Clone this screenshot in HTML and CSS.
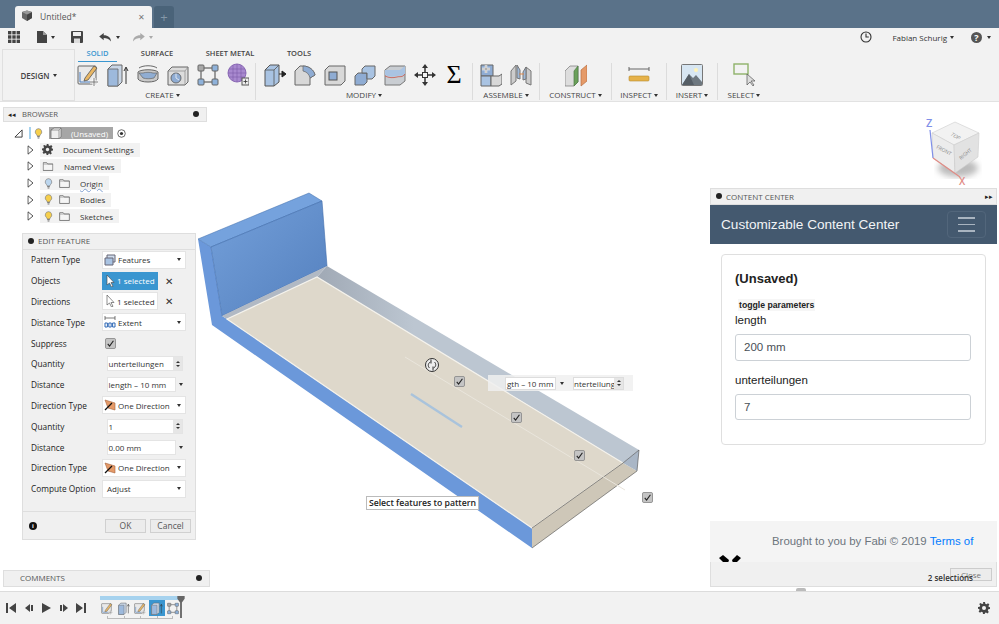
FILE: index.html
```html
<!DOCTYPE html>
<html lang="en">
<head>
  <meta charset="UTF-8">
  <title>Untitled* - Fusion 360</title>
  <link rel="stylesheet" href="styles.css">
</head>
<body>
  <!-- shared icons -->
  <svg class="defs" width="0" height="0">
    <symbol id="bulb" viewBox="0 0 10 12">
      <path d="M5 .6a3.7 3.7 0 0 0-2.2 6.6c.5.5.7 1 .7 1.6h3c0-.6.2-1.1.7-1.6A3.7 3.7 0 0 0 5 .6z" fill="#f6cf4c" stroke="#777" stroke-width=".7"/>
      <path d="M3.600 9.500h2.800M4 11h2" stroke="#666" stroke-width="1"/>
    </symbol>
    <symbol id="bulb-off" viewBox="0 0 10 12">
      <path d="M5 .6a3.7 3.7 0 0 0-2.2 6.6c.5.5.7 1 .7 1.6h3c0-.6.2-1.1.7-1.6A3.7 3.7 0 0 0 5 .6z" fill="#bcd6ee" stroke="#777" stroke-width=".7"/>
      <path d="M3.600 9.500h2.800M4 11h2" stroke="#666" stroke-width="1"/>
    </symbol>
    <symbol id="folder" viewBox="0 0 12 10">
      <path d="M.6 9.400V.8h4l1 1.400h5.800v7.200z" fill="#f5f5f5" stroke="#555" stroke-width=".8"/>
      <path d="M.6 2.400h10.800" stroke="#888" stroke-width=".6"/>
    </symbol>
    <symbol id="arrow-right" viewBox="0 0 8 12">
      <path d="M1 1l6 5-6 5z" fill="#fff" stroke="#333" stroke-width="1"/>
    </symbol>
    <symbol id="check" viewBox="0 0 12 12">
      <rect x=".5" y=".5" width="11" height="11" rx="1.600" fill="#c4c4c4" stroke="#8c8c8c"/>
      <path d="M3 6.500l2 2.400L9.200 3" fill="none" stroke="#222" stroke-width="1.200"/>
    </symbol>
    <symbol id="sketch" viewBox="0 0 22 24">
      <rect x="1" y="3" width="18" height="18" rx="1" fill="#e9e9e9" stroke="#666"/>
      <path d="M3 19L3 9M3 19h13" stroke="#4d7fc0" stroke-width="1"/>
      <path d="M8 15L17 3l3 2-9 12-4 1z" fill="#e9b765" stroke="#555" stroke-width=".8"/>
      <path d="M13 19h8M17 15v8" stroke="#fff" stroke-width="3"/>
      <path d="M13 19h8M17 15v8" stroke="#777" stroke-width="1"/>
    </symbol>
    <symbol id="extrude" viewBox="0 0 22 24">
      <path d="M1 6l4-4h10v17l-4 4H1z" fill="#c9d6e6" stroke="#666"/>
      <path d="M1 6h10v17H1z" fill="#9db9dc" stroke="#666" stroke-width=".8"/>
      <path d="M19 21V5M17 8l2-4 2 4" fill="none" stroke="#333"/>
    </symbol>
    <symbol id="pattern" viewBox="0 0 22 22">
      <path d="M5 4h12M4 6v10M18 6v10M6 18h10" stroke="#444" stroke-width="1"/>
      <rect x="1" y="1" width="6" height="6" rx="1" fill="#a9a9a9" stroke="#666"/>
      <rect x="15" y="1" width="6" height="6" rx="1" fill="#8fb2da" stroke="#666"/>
      <rect x="1" y="15" width="6" height="6" rx="1" fill="#8fb2da" stroke="#666"/>
      <rect x="15" y="15" width="6" height="6" rx="1" fill="#8fb2da" stroke="#666"/>
    </symbol>
  </svg>

  <div class="app">
    <header class="title-bar">
      <div class="doc-tab">
        <svg class="tab-icon" viewBox="0 0 12 12"><path d="M1 2l5-1.500L11 2v6L6 11 1 8z" fill="#666"/><path d="M6 4.500V11l5-3V2z" fill="#444"/><path d="M1 2l5 2.500L11 2 6 .5z" fill="#999"/></svg>
        <span class="doc-name">Untitled*</span>
        <span class="doc-close">✕</span>
      </div>
      <div class="new-tab">+</div>
    </header>

    <div class="toolbar">
      <div class="quick-bar">
        <svg class="qa-grid" viewBox="0 0 12 12" fill="#444"><rect width="3.400" height="3.400"/><rect x="4.300" width="3.400" height="3.400"/><rect x="8.600" width="3.400" height="3.400"/><rect y="4.300" width="3.400" height="3.400"/><rect x="4.300" y="4.300" width="3.400" height="3.400"/><rect x="8.600" y="4.300" width="3.400" height="3.400"/><rect y="8.600" width="3.400" height="3.400"/><rect x="4.300" y="8.600" width="3.400" height="3.400"/><rect x="8.600" y="8.600" width="3.400" height="3.400"/></svg>
        <svg class="qa-file" viewBox="0 0 10 12"><path d="M0 0h6l4 4v8H0z" fill="#444"/><path d="M6 0v4h4" fill="#999"/></svg>
        <span class="caret qa-caret"></span>
        <svg class="qa-save" viewBox="0 0 12 12"><path d="M0 1a1 1 0 0 1 1-1h10a1 1 0 0 1 1 1v10a1 1 0 0 1-1 1H1a1 1 0 0 1-1-1z" fill="#444"/><rect x="2" y="1" width="8" height="4" fill="#eee"/><rect x="3" y="7.500" width="6" height="4.500" fill="#ddd"/></svg>
        <svg class="qa-undo" viewBox="0 0 14 10"><path d="M5 0L0 4l5 4V5.500c3 0 6 .6 8 4C13 5 10 2.500 5 2.500z" fill="#444"/></svg>
        <span class="caret qa-caret"></span>
        <svg class="qa-redo" viewBox="0 0 14 10"><path d="M9 0l5 4-5 4V5.500c-3 0-6 .6-8 4C1 5 4 2.500 9 2.500z" fill="#aaa"/></svg>
        <span class="caret qa-caret light"></span>
        <div class="quick-right">
          <svg class="qa-clock" viewBox="0 0 12 12"><circle cx="6" cy="6" r="5" fill="none" stroke="#333" stroke-width="1.100"/><path d="M6 2.600V6h2.800" fill="none" stroke="#333" stroke-width="1.100"/></svg>
          <span class="user-name">Fabian Schurig</span>
          <span class="caret"></span>
          <span class="help">?</span>
          <span class="caret"></span>
        </div>
      </div>

      <div class="ribbon">
        <div class="design-btn">DESIGN <span class="caret"></span></div>
        <div class="ribbon-main">
          <div class="ribbon-tabs">
            <span class="ribbon-tab active">SOLID</span>
            <span class="ribbon-tab">SURFACE</span>
            <span class="ribbon-tab">SHEET METAL</span>
            <span class="ribbon-tab">TOOLS</span>
          </div>
          <div class="ribbon-groups">
            <div class="group create">
              <div class="tools">
                <svg class="tool" viewBox="0 0 22 24"><use href="#sketch"/></svg>
                <svg class="tool" viewBox="0 0 22 24"><use href="#extrude"/></svg>
                <svg class="tool" viewBox="0 0 22 24"><path d="M1 9c3-3 17-3 20 0v7c-2 4-18 4-20 0z" fill="#c9c9c9" stroke="#666"/><path d="M6 10c3-1 7-1 10 0l4 0-3 5c-4 1-8 1-11 0L2 10z" fill="#90add2" stroke="#666" stroke-width=".7"/><path d="M2 5C6 2 16 2 20 5" fill="none" stroke="#444" stroke-width=".8"/></svg>
                <svg class="tool" viewBox="0 0 22 24"><path d="M1 8l4-4h16v15l-3 3H1z" fill="#ddd" stroke="#666"/><path d="M1 8h17v14M18 8l3-4" fill="none" stroke="#888" stroke-width=".7"/><circle cx="9" cy="15" r="5" fill="#8facd3" stroke="#555" stroke-width=".8"/><path d="M9 15V10.500M9 15l3 2" stroke="#fff" stroke-width=".7"/></svg>
                <svg class="tool" viewBox="0 0 22 22"><use href="#pattern"/></svg>
                <svg class="tool" viewBox="0 0 22 24"><circle cx="10" cy="10" r="9" fill="#a889cf" stroke="#8a68b5"/><path d="M2 6h16M1 10h18M2 14h16M6 2v16M10 1v18M14 2v16" stroke="#7c5aa8" stroke-width=".6"/><rect x="15" y="15" width="7" height="7" fill="#eee" stroke="#555"/><path d="M16.500 18.500h4M18.500 16.500v4" stroke="#333" stroke-width=".8"/></svg>
              </div>
              <div class="group-label">CREATE <span class="caret"></span></div>
            </div>
            <div class="group modify">
              <div class="tools">
                <svg class="tool" viewBox="0 0 22 24"><path d="M1 7l5-5h9v17l-5 4H1z" fill="#a9c3e2" stroke="#555"/><path d="M1 7h9v16M10 7l5-5" fill="none" stroke="#555" stroke-width=".8"/><path d="M15 11h4M18 8l4 3-4 3z" stroke="#222" fill="#222"/></svg>
                <svg class="tool" viewBox="0 0 22 24"><path d="M1 8l5-5h3c6 0 11 4 12 9l-5 3v7H1z" fill="#d8d8d8" stroke="#666"/><path d="M9 3c6 0 11 4 12 9l-5 3c-1-4-3-6-7-7z" fill="#8facd3" stroke="#666" stroke-width=".7"/></svg>
                <svg class="tool" viewBox="0 0 22 24"><path d="M1 7l4-4h16v15l-4 4H1z" fill="#d8d8d8" stroke="#666"/><rect x="5" y="9" width="8" height="8" fill="#8facd3" stroke="#555"/></svg>
                <svg class="tool" viewBox="0 0 22 24"><path d="M1 13l3-3h9v9l-3 3H1z" fill="#8facd3" stroke="#666"/><path d="M8 6l3-3h10v10l-3 3h-5v-6H8z" fill="#a9c3e2" stroke="#666"/></svg>
                <svg class="tool" viewBox="0 0 22 24"><path d="M1 7l5-4h15v15l-5 4H1z" fill="#c9cdd2" stroke="#777"/><path d="M1 7h15l5-4v8c-3 3-5 1-8 2-4 1-8 1-12-1z" fill="#a9c3e2"/><path d="M1 13c4 2 8 2 12 1 3-1 5 1 8-3" fill="none" stroke="#c8635a" stroke-width=".9"/></svg>
                <svg class="tool" viewBox="0 0 22 24"><path d="M11 3v18M2 12h18" stroke="#333" stroke-width="1.500"/><path d="M11 1l3 4H8zM11 23l3-4H8zM0 12l4-3v6zM22 12l-4-3v6z" fill="#333"/><rect x="8.500" y="9.500" width="5" height="5" fill="#f2f2f2" stroke="#333"/></svg>
                <span class="sigma">Σ</span>
              </div>
              <div class="group-label">MODIFY <span class="caret"></span></div>
            </div>
            <div class="group assemble">
              <div class="tools">
                <svg class="tool" viewBox="0 0 22 24"><path d="M1 2h12v11H1z" fill="#8facd3" stroke="#666"/><path d="M1 13h10v10H1z" fill="#a9c3e2" stroke="#666"/><path d="M11 13h8l3-2v10l-3 2h-8z" fill="#d8d8d8" stroke="#666"/><path d="M2 6h8M6 2v8" stroke="#fff" stroke-width="2.400"/><path d="M2 6h8M6 2v8" stroke="#666" stroke-width=".6"/></svg>
                <svg class="tool" viewBox="0 0 22 24"><path d="M1 8l5-6v16l-5 4z" fill="#ccc" stroke="#777"/><path d="M7 2l3 5v9l-3-1z" fill="#9fb8d6" stroke="#777"/><path d="M21 8l-5-4v16l5 2z" fill="#ccc" stroke="#777"/><path d="M16 4l-3 5v8l3-1z" fill="#9fb8d6" stroke="#777"/><path d="M9 11h5" stroke="#d9864b"/></svg>
              </div>
              <div class="group-label">ASSEMBLE <span class="caret"></span></div>
            </div>
            <div class="group construct">
              <div class="tools">
                <svg class="tool" viewBox="0 0 22 22"><path d="M0 7l5-5h8v16l-4 4H0z" fill="#ddd" stroke="#777" stroke-width=".7"/><path d="M9 7l4-5v16l-4 4z" fill="#6aa05a" stroke="#4f7d45" stroke-width=".7"/><path d="M16 6l6-5v16l-6 5z" fill="#e59a68" stroke="#b86f42" stroke-width=".7"/></svg>
              </div>
              <div class="group-label">CONSTRUCT <span class="caret"></span></div>
            </div>
            <div class="group inspect">
              <div class="tools">
                <svg class="tool" viewBox="0 0 22 22"><path d="M1 5h20M1 3v4M21 3v4" stroke="#666" stroke-width="1"/><rect x="1" y="12" width="20" height="5" rx="1" fill="#e6b24a" stroke="#b78a2e" stroke-width=".6"/></svg>
              </div>
              <div class="group-label">INSPECT <span class="caret"></span></div>
            </div>
            <div class="group insert">
              <div class="tools">
                <svg class="tool" viewBox="0 0 22 22"><rect x=".5" y=".5" width="21" height="21" rx="1" fill="#d7e6f2" stroke="#777"/><circle cx="15" cy="6" r="2" fill="#fff3b8"/><path d="M1 21l7-11 4 4 3-3 6 7v3z" fill="#6e7880"/><path d="M1 21l7-11 5 11z" fill="#555e66"/></svg>
              </div>
              <div class="group-label">INSERT <span class="caret"></span></div>
            </div>
            <div class="group select">
              <div class="tools">
                <svg class="tool" viewBox="0 0 22 24"><rect x="1" y="1" width="14" height="10" fill="none" stroke="#8fb36a" stroke-width="1.400"/><path d="M14 11v11l3-3 3 4 1-1-3-4h4z" fill="#ddd" stroke="#555" stroke-width=".7"/></svg>
              </div>
              <div class="group-label">SELECT <span class="caret"></span></div>
            </div>
          </div>
        </div>
      </div>
    </div>

    <main class="canvas">
      <!-- model -->
      <svg class="model" viewBox="0 102 999 489">
        <defs>
          <linearGradient id="wall" x1="0" y1="0" x2="1" y2="1"><stop offset="0" stop-color="#74a0da"/><stop offset="1" stop-color="#5480be"/></linearGradient>
          <linearGradient id="back" x1="0" y1="0" x2="1" y2="0"><stop offset="0" stop-color="#a0a9b5"/><stop offset=".3" stop-color="#bcc6d1"/></linearGradient>
          <filter id="soft"><feGaussianBlur stdDeviation="3"/></filter>
        </defs>
        <path d="M198 239L212 325 532 548 532 528 227 319 222 316 211 247z" fill="#6b98da"/>
        <path d="M198 239L309 193 322 201 211 247z" fill="#75a2dd" stroke="#3f6cab" stroke-width=".5"/>
        <path d="M211 247L322 201 327 266 222 316z" fill="url(#wall)" stroke="#3f6cab" stroke-width=".6"/>
        <path d="M327 266L639 450 623 463 317 277z" fill="url(#back)"/>
        <path d="M222 316L327 266 317 277 227 319z" fill="#b1b9c4"/>
        <path d="M227 319L317 277 623 463 532 528z" fill="#ded8cb" stroke="#f4f2ec" stroke-width="1.200"/>
        <path d="M532 528L623 463 637 471 532 548z" fill="#cec7b8"/>
        <path d="M623 463L639 450 637 471z" fill="#a9b6c6"/>
        <path d="M532 528L623 463 639 450 637 471 532 548" fill="none" stroke="#4c4c4c" stroke-width=".6"/>
        <path d="M405 357L625 490" stroke="#e9e5dc" stroke-width="1"/>
        <path d="M411 394L462 427" stroke="#a9c3dc" stroke-width="2.400"/>
        <circle cx="432" cy="365" r="6.500" fill="#eee" stroke="#333" stroke-width="1"/>
        <path d="M429.500 368c-2-2-1.500-5 1-6M434.500 362c2 2 1.500 5-1 6M431 359.500l0 4M433 366.500l0 4" fill="none" stroke="#333" stroke-width="1"/>
        <use href="#check" x="454" y="376" width="11" height="11"/>
        <use href="#check" x="511" y="412" width="11" height="11"/>
        <use href="#check" x="574" y="450" width="11" height="11"/>
        <use href="#check" x="642" y="492" width="11" height="11"/>
        <!-- view cube -->
        <ellipse cx="958" cy="168" rx="20" ry="9" fill="#bbb" filter="url(#soft)"/>
        <path d="M932 133L955 122 979 133 954 145z" fill="#f2f2f2" stroke="#ccc" stroke-width=".6"/>
        <path d="M932 133L954 145 955 173 933 158z" fill="#ececec" stroke="#ccc" stroke-width=".6"/>
        <path d="M954 145L979 133 978 157 955 173z" fill="#e2e2e2" stroke="#ccc" stroke-width=".6"/>
        <path d="M930 130L933 158" stroke="#7f8fe8" stroke-width="1.200"/>
        <path d="M933 158L960 177" stroke="#e08b85" stroke-width="1.200"/>
        <text class="axis z" x="926" y="127">Z</text>
        <text class="axis x" x="959" y="185">X</text>
        <text class="cube-txt" transform="translate(950 135) rotate(30) skewX(-20)">TOP</text>
        <text class="cube-txt" transform="translate(936 148) rotate(28)">FRONT</text>
        <text class="cube-txt" transform="translate(961 160) rotate(-40)">RIGHT</text>
      </svg>

      <!-- browser -->
      <section class="browser">
        <div class="panel-head"><span class="head-arrows">◂◂</span><span class="head-title">BROWSER</span><span class="head-dot"></span></div>
        <div class="tree">
          <div class="tree-row root">
            <svg class="root-arrow" viewBox="0 0 10 10"><path d="M9 1v8H1z" fill="#fff" stroke="#333"/></svg>
            <span class="active-bar"></span>
            <svg class="ic-bulb" viewBox="0 0 10 12"><use href="#bulb"/></svg>
            <span class="root-name"><svg class="root-cube" viewBox="0 0 12 12"><path d="M1 3l3-2h7v9l-2 1.500H1z" fill="#eee" stroke="#666" stroke-width=".7"/><path d="M1 3h8v8.500M9 3l2-2" fill="none" stroke="#666" stroke-width=".6"/></svg>(Unsaved)</span>
            <svg class="ic-radio" viewBox="0 0 10 10"><circle cx="5" cy="5" r="4.200" fill="#fff" stroke="#333" stroke-width=".8"/><circle cx="5" cy="5" r="1.800" fill="#333"/></svg>
          </div>
          <div class="tree-row">
            <svg class="expander" viewBox="0 0 8 12"><use href="#arrow-right"/></svg>
            <span class="pill">
              <svg class="ic-gear" viewBox="0 0 12 12"><path d="M5 0h2l.3 1.700 1.300.5L10 1.200l1.400 1.400-1 1.400.6 1.300L12 5v2l-1.700.3-.5 1.300 1 1.400-1.400 1.400-1.400-1-1.300.6L7 12H5l-.3-1.700-1.300-.5-1.400 1-1.400-1.400 1-1.400-.6-1.300L0 7V5l1.700-.3.5-1.300-1-1.400L2.600 1l1.400 1 1.300-.6z" fill="#444"/><circle cx="6" cy="6" r="1.800" fill="#eee"/></svg>
              <span class="node-name">Document Settings</span>
            </span>
          </div>
          <div class="tree-row">
            <svg class="expander" viewBox="0 0 8 12"><use href="#arrow-right"/></svg>
            <span class="pill">
              <svg class="ic-folder" viewBox="0 0 12 10"><use href="#folder"/></svg>
              <span class="node-name">Named Views</span>
            </span>
          </div>
          <div class="tree-row">
            <svg class="expander" viewBox="0 0 8 12"><use href="#arrow-right"/></svg>
            <span class="pill">
              <svg class="ic-bulb node" viewBox="0 0 10 12"><use href="#bulb-off"/></svg>
              <svg class="ic-folder" viewBox="0 0 12 10"><use href="#folder"/></svg>
              <span class="node-name squiggle">Origin</span>
            </span>
          </div>
          <div class="tree-row">
            <svg class="expander" viewBox="0 0 8 12"><use href="#arrow-right"/></svg>
            <span class="pill">
              <svg class="ic-bulb node" viewBox="0 0 10 12"><use href="#bulb"/></svg>
              <svg class="ic-folder" viewBox="0 0 12 10"><use href="#folder"/></svg>
              <span class="node-name">Bodies</span>
            </span>
          </div>
          <div class="tree-row">
            <svg class="expander" viewBox="0 0 8 12"><use href="#arrow-right"/></svg>
            <span class="pill">
              <svg class="ic-bulb node" viewBox="0 0 10 12"><use href="#bulb"/></svg>
              <svg class="ic-folder" viewBox="0 0 12 10"><use href="#folder"/></svg>
              <span class="node-name">Sketches</span>
            </span>
          </div>
        </div>
      </section>

      <!-- edit feature dialog -->
      <section class="edit-feature">
        <div class="panel-head"><span class="head-dot left"></span><span class="head-title">EDIT FEATURE</span></div>
        <div class="form">
          <div class="form-row"><label>Pattern Type</label><div class="field select-field"><svg class="f-ic" viewBox="0 0 12 12"><path d="M3 1h8v7H3z" fill="#cfdcec" stroke="#667"/><path d="M1 4h8v7H1z" fill="#a9c3e2" stroke="#667"/></svg>Features<span class="caret end"></span></div></div>
          <div class="form-row"><label>Objects</label><div class="field sel on"><svg class="f-ic" viewBox="0 0 12 12"><path d="M3 0v10l2.500-2 2 4 1.500-.7-2-3.800h3z" fill="#fff" stroke="#444" stroke-width=".6"/></svg>1 selected</div><span class="x">✕</span></div>
          <div class="form-row"><label>Directions</label><div class="field sel"><svg class="f-ic" viewBox="0 0 12 12"><path d="M3 0v10l2.500-2 2 4 1.500-.7-2-3.800h3z" fill="#fff" stroke="#444" stroke-width=".6"/></svg>1 selected</div><span class="x">✕</span></div>
          <div class="form-row"><label>Distance Type</label><div class="field select-field"><svg class="f-ic" viewBox="0 0 12 12"><path d="M1 2h10M1 0v4M11 0v4" stroke="#444" stroke-width=".7"/><path d="M1 7h2.400v4H1zM4.800 7h2.400v4H4.800zM8.600 7H11v4H8.600z" fill="#fff" stroke="#2f68b5"/></svg>Extent<span class="caret end"></span></div></div>
          <div class="form-row"><label>Suppress</label><svg class="suppress" viewBox="0 0 12 12"><use href="#check"/></svg></div>
          <div class="form-row"><label>Quantity</label><div class="input-spin"><span class="inp-text">unterteilungen</span><span class="spin"><i></i><i class="down"></i></span></div></div>
          <div class="form-row"><label>Distance</label><div class="input-drop"><span class="inp-text">length – 10 mm</span></div><span class="caret drop"></span></div>
          <div class="form-row"><label>Direction Type</label><div class="field select-field"><svg class="f-ic" viewBox="0 0 12 12"><path d="M1 1l10 3v7L4 9z" fill="#e59a68" stroke="#a5623a" stroke-width=".6"/><path d="M1 11l7-7" stroke="#111" stroke-width="1.300"/></svg>One Direction<span class="caret end"></span></div></div>
          <div class="form-row"><label>Quantity</label><div class="input-spin"><span class="inp-text">1</span><span class="spin"><i></i><i class="down"></i></span></div></div>
          <div class="form-row"><label>Distance</label><div class="input-drop"><span class="inp-text">0.00 mm</span></div><span class="caret drop"></span></div>
          <div class="form-row"><label>Direction Type</label><div class="field select-field"><svg class="f-ic" viewBox="0 0 12 12"><path d="M1 1l10 3v7L4 9z" fill="#e59a68" stroke="#a5623a" stroke-width=".6"/><path d="M1 11l7-7" stroke="#111" stroke-width="1.300"/></svg>One Direction<span class="caret end"></span></div></div>
          <div class="form-row"><label>Compute Option</label><div class="field select-field plain">Adjust<span class="caret end"></span></div></div>
        </div>
        <div class="form-foot">
          <span class="info">i</span>
          <button class="btn">OK</button>
          <button class="btn">Cancel</button>
        </div>
      </section>

      <!-- in-canvas bits -->
      <div class="hud">
        <span class="hud-input">gth – 10 mm</span>
        <span class="caret"></span>
        <span class="hud-spin"><span class="hud-text">nterteilungen</span><span class="spin"><i></i><i class="down"></i></span></span>
      </div>
      <div class="tooltip">Select features to pattern</div>

      <section class="comments">
        <span class="head-title">COMMENTS</span><span class="head-dot plus"></span>
      </section>

      <!-- content center palette -->
      <section class="content-center">
        <div class="panel-head"><span class="head-dot left"></span><span class="head-title">CONTENT CENTER</span><span class="head-arrows end">▸▸</span></div>
        <div class="cc-nav">
          <span class="cc-brand">Customizable Content Center</span>
          <span class="cc-toggler"><i></i><i></i><i></i></span>
        </div>
        <div class="cc-body">
          <div class="cc-card">
            <h2>(Unsaved)</h2>
            <div class="cc-toggle">toggle parameters</div>
            <div class="cc-label">length</div>
            <div class="cc-input">200 mm</div>
            <div class="cc-label second">unterteilungen</div>
            <div class="cc-input">7</div>
          </div>
        </div>
        <div class="cc-footer">
          <p>Brought to you by Fabi © 2019 <a>Terms of</a></p>
          <svg class="cc-logo" viewBox="0 0 22 8"><path d="M0 3l4-3 6 5-1 3H5zM22 3l-4-3-5 5 1 3h3z" fill="#000"/></svg>
        </div>
        <div class="cc-status">
          <span class="cc-selections">2 selections</span>
          <button class="cc-close">Close</button>
        </div>
      </section>
      <span class="cc-handle"></span>
    </main>

    <footer class="timeline">
      <div class="player">
        <svg viewBox="0 0 10 10"><path d="M0 0h2v10H0zM10 0v10L3 5z" fill="#444"/></svg>
        <svg viewBox="0 0 10 10"><path d="M6 1v8L1 5zM7 2h2v6H7z" fill="#444"/></svg>
        <svg viewBox="0 0 10 10"><path d="M1 0l9 5-9 5z" fill="#444"/></svg>
        <svg viewBox="0 0 10 10"><path d="M4 1v8l5-4zM1 2h2v6H1z" fill="#444"/></svg>
        <svg viewBox="0 0 10 10"><path d="M10 0H8v10h2zM0 0v10l7-5z" fill="#444"/></svg>
      </div>
      <div class="history">
        <span class="hist-bar"></span>
        <span class="hist-item"><svg viewBox="0 0 22 24"><use href="#sketch"/></svg></span>
        <span class="hist-item"><svg viewBox="0 0 22 24"><use href="#extrude"/></svg></span>
        <span class="hist-item"><svg viewBox="0 0 22 24"><use href="#sketch"/></svg></span>
        <span class="hist-item on"><svg viewBox="0 0 22 24"><use href="#extrude"/></svg></span>
        <span class="hist-item"><svg viewBox="0 0 22 22"><use href="#pattern"/></svg></span>
        <span class="hist-links"></span>
        <svg class="hist-marker" viewBox="0 0 8 24"><path d="M0 0h8v3L5 7v17H3V7L0 3z" fill="#666"/></svg>
      </div>
      <svg class="settings" viewBox="0 0 12 12"><path d="M5 0h2l.3 1.700 1.300.5L10 1.200l1.400 1.400-1 1.400.6 1.300L12 5v2l-1.700.3-.5 1.300 1 1.400-1.400 1.400-1.400-1-1.300.6L7 12H5l-.3-1.700-1.300-.5-1.400 1-1.400-1.400 1-1.400-.6-1.300L0 7V5l1.700-.3.5-1.300-1-1.400L2.600 1l1.400 1 1.300-.6z" fill="#444"/><circle cx="6" cy="6" r="2" fill="#f2f2f2"/></svg>
    </footer>
  </div>
</body>
</html>
```

FILE: styles.css
```css
* {
  box-sizing: border-box;
}

body {
  margin: 0;
  font-family: "Open Sans", "Liberation Sans", sans-serif;
  font-size: 8px;
  color: #333;
  background: #fff;
}

.defs {
  position: absolute;
}

.app {
  width: 999px;
  height: 624px;
  display: flex;
  flex-direction: column;
  overflow: hidden;
}

.caret {
  display: inline-block;
  width: 0;
  height: 0;
  border-left: 2.5px solid transparent;
  border-right: 2.5px solid transparent;
  border-top: 3px solid #333;
  vertical-align: middle;
}

/* title bar */
.title-bar {
  height: 28px;
  flex: none;
  background: #5a7289;
  display: flex;
  align-items: flex-end;
  padding-left: 15px;
  gap: 2px;
}

.doc-tab {
  width: 137px;
  height: 22px;
  background: #f2f2f2;
  border-radius: 3px 3px 0 0;
  display: flex;
  align-items: center;
  padding: 0 7px 2px 6px;
}

.tab-icon {
  width: 12px;
  height: 12px;
}

.doc-name {
  margin-left: 7px;
  font-size: 8.5px;
  color: #555;
  flex: 1;
}

.doc-close {
  font-size: 8px;
  color: #777;
}

.new-tab {
  width: 20px;
  height: 22px;
  background: #4a6379;
  border-radius: 3px 3px 0 0;
  color: #8497a8;
  font-size: 13px;
  line-height: 22px;
  text-align: center;
}

/* toolbar */
.toolbar {
  height: 74px;
  flex: none;
  background: #f2f2f2;
  border-bottom: 1px solid #e2e2e2;
}

.quick-bar {
  height: 18px;
  margin-bottom: 2px;
  display: flex;
  align-items: center;
  padding-left: 8px;
}

.qa-grid {
  width: 12px;
  height: 12px;
}

.qa-file {
  width: 10px;
  height: 12px;
  margin-left: 17px;
}

.qa-caret {
  margin-left: 4px;
}

.qa-caret.light {
  border-top-color: #aaa;
}

.qa-save {
  width: 12px;
  height: 12px;
  margin-left: 16px;
}

.qa-undo {
  width: 13px;
  height: 9px;
  margin-left: 16px;
}

.qa-redo {
  width: 13px;
  height: 9px;
  margin-left: 12px;
}

.quick-right {
  margin-left: auto;
  display: flex;
  align-items: center;
  padding-right: 8.5px;
}

.qa-clock {
  width: 12px;
  height: 12px;
}

.user-name {
  margin-left: 20px;
  margin-right: 3px;
  font-size: 8px;
  color: #333;
}

.help {
  width: 11px;
  height: 11px;
  margin-left: 17px;
  margin-right: 4.5px;
  border-radius: 50%;
  background: #555;
  color: #fff;
  font-size: 9px;
  font-weight: 700;
  line-height: 11px;
  text-align: center;
}

.ribbon {
  height: 53px;
  display: flex;
  padding-left: 2px;
}

.design-btn {
  width: 73px;
  height: 52px;
  margin-top: 1px;
  border: 1px solid #e0e0e0;
  display: flex;
  align-items: center;
  justify-content: center;
  gap: 3px;
  font-size: 8px;
  font-weight: 600;
  color: #444;
}

.ribbon-main {
  margin-left: 3px;
}

.ribbon-tabs {
  display: grid;
  grid-template-columns: 39px 80px 66px 72px;
  height: 14px;
  text-align: center;
  line-height: 10px;
  font-size: 7.5px;
  font-weight: 600;
  color: #444;
}

.ribbon-tab.active {
  color: #3a96d0;
  border-bottom: 1px solid #3a96d0;
}

.ribbon-groups {
  display: flex;
  height: 37px;
  margin-top: 1px;
}

.group {
  display: flex;
  flex-direction: column;
  align-items: center;
  justify-content: space-between;
  border-right: 1px solid #dcdcdc;
}

.group.create { width: 178px; padding-right: 8px; }
.group.modify { width: 217px; }
.group.assemble { width: 67px; }
.group.construct { width: 72px; }
.group.inspect { width: 55px; }
.group.insert { width: 51px; }
.group.select { width: 52px; border-right: 0; }

.tools {
  display: flex;
  gap: 8px;
}

.tool {
  width: 22px;
  height: 24px;
  flex: none;
}

.sigma {
  width: 20px;
  height: 24px;
  font-family: "Liberation Serif", serif;
  font-size: 26px;
  line-height: 23px;
  text-align: center;
  color: #000;
}

.group-label {
  height: 10px;
  line-height: 10px;
  font-size: 8px;
  color: #444;
}

/* canvas */
.canvas {
  position: relative;
  flex: 1;
  background: #fff;
  overflow: hidden;
}

.model {
  position: absolute;
  left: 0;
  top: 0;
  width: 999px;
  height: 489px;
}

.axis {
  font-family: "Open Sans", sans-serif;
  font-size: 11px;
  font-weight: 600;
}

.axis.z {
  fill: #7f8fe8;
}

.axis.x {
  fill: #e08b85;
}

.cube-txt {
  font-family: "Open Sans", sans-serif;
  font-size: 5px;
  fill: #8a8a8a;
}

.panel-head {
  height: 15px;
  padding-bottom: 1px;
  display: flex;
  align-items: center;
  background: #f0f0f0;
  border: 1px solid #dedede;
  color: #555;
}

.head-title {
  font-size: 8px;
  color: #555;
}

.browser .head-title {
  font-size: 7.7px;
}

.head-arrows {
  font-size: 7px;
  margin: 0 6px 0 4px;
  color: #222;
}

.head-arrows.end {
  margin: 0 3px 0 auto;
}

.head-dot {
  width: 6px;
  height: 6px;
  margin-left: auto;
  margin-right: 7px;
  border-radius: 50%;
  background: #222;
}

.head-dot.left {
  margin: 0 4px 0 5px;
}

/* browser */
.browser {
  position: absolute;
  left: 3px;
  top: 5px;
  width: 204px;
}

.tree {
  padding-top: 3px;
}

.tree-row {
  height: 16.6px;
  display: flex;
  align-items: center;
  padding-left: 24px;
}

.tree-row.root {
  padding-left: 11px;
}

.root-arrow {
  width: 9px;
  height: 9px;
}

.active-bar {
  width: 2px;
  height: 12px;
  margin-left: 6px;
  background: #a6d2ee;
}

.ic-bulb {
  width: 9px;
  height: 11px;
  margin-left: 3px;
}

.root-name {
  width: 64px;
  height: 12px;
  margin-left: 6px;
  background: #a6a6a6;
  color: #fff;
  display: flex;
  align-items: center;
  font-size: 8px;
}

.root-cube {
  width: 12px;
  height: 12px;
  margin: 0 9px 0 1px;
}

.ic-radio {
  width: 9px;
  height: 9px;
  margin-left: 4px;
}

.expander {
  width: 7px;
  height: 10px;
}

.pill {
  height: 14px;
  margin-left: 6px;
  padding: 0 6px 0 2px;
  display: flex;
  align-items: center;
  background: #f2f2f2;
}

.ic-gear {
  width: 11px;
  height: 11px;
}

.ic-folder {
  width: 11px;
  height: 9px;
}

.ic-bulb.node {
  margin: 0 6px 0 2px;
}

.pill > .ic-folder:first-child {
  width: 12px;
}

.node-name {
  margin-left: 10px;
  font-size: 8px;
  color: #333;
}

.node-name.squiggle {
  text-decoration: underline wavy #7f9fd0;
  text-decoration-thickness: 1px;
}

/* edit feature */
.edit-feature {
  position: absolute;
  left: 22px;
  top: 131px;
  width: 174px;
  height: 307px;
  background: #f0f0f0;
  border: 1px solid #dedede;
  display: flex;
  flex-direction: column;
}

.edit-feature .panel-head {
  border-width: 0 0 1px;
  height: 15.5px;
  flex: none;
}

.form {
  flex: 1;
  display: grid;
  grid-auto-rows: 20.8px;
}

.form-row {
  display: flex;
  align-items: center;
  padding-left: 8px;
  position: relative;
}

.form-row label {
  width: 71px;
  flex: none;
  font-size: 8.3px;
  color: #222;
}

.field {
  height: 18px;
  background: #fff;
  border: 1px solid #e4e4e4;
  display: flex;
  align-items: center;
  padding-left: 1px;
  font-size: 8px;
  color: #333;
  white-space: nowrap;
}

.select-field {
  width: 84px;
}

.select-field.plain {
  padding-left: 4px;
}

.f-ic {
  width: 12px;
  height: 12px;
  margin-right: 2px;
  flex: none;
}

.caret.end {
  margin-left: auto;
  margin-right: 4px;
}

.sel {
  width: 56px;
  font-size: 8px;
}

.sel .f-ic {
  margin-right: 1px;
}

.sel.on {
  background: #3a96d0;
  border-color: #3a96d0;
  color: #fff;
}

.x {
  margin-left: 7px;
  font-size: 10px;
  color: #333;
}

.suppress {
  width: 11px;
  height: 11px;
  margin-left: 3px;
}

.input-spin {
  margin-left: 5px;
  width: 76px;
  height: 15px;
  display: flex;
  background: #fff;
  border: 1px solid #e4e4e4;
}

.inp-text {
  flex: 1;
  padding-left: 0.5px;
  line-height: 13px;
  font-size: 8px;
  white-space: nowrap;
  overflow: hidden;
}

.spin {
  width: 9px;
  flex: none;
  background: #e6e6e6;
  display: flex;
  flex-direction: column;
  justify-content: center;
  align-items: center;
  gap: 2px;
}

.spin i {
  width: 0;
  height: 0;
  border-left: 2px solid transparent;
  border-right: 2px solid transparent;
  border-bottom: 2px solid #333;
}

.spin i.down {
  border-bottom: 0;
  border-top: 2px solid #333;
}

.input-drop {
  margin-left: 5px;
  width: 69px;
  height: 15px;
  display: flex;
  background: #fff;
  border: 1px solid #e4e4e4;
}

.caret.drop {
  margin-left: 3px;
}

.form-foot {
  height: 28px;
  flex: none;
  border-top: 1px solid #dedede;
  display: flex;
  align-items: center;
  justify-content: flex-end;
  gap: 4px;
  padding-right: 4px;
}

.info {
  width: 8px;
  height: 8px;
  margin-right: auto;
  margin-left: 6px;
  border-radius: 50%;
  background: #111;
  color: #fff;
  font-size: 6px;
  font-weight: 700;
  line-height: 8px;
  text-align: center;
}

.btn {
  width: 41px;
  height: 14px;
  padding: 0;
  font-family: inherit;
  font-size: 8.5px;
  color: #555;
  background: #ececec;
  border: 1px solid #d0d0d0;
}

/* heads up input and tip */
.hud {
  position: absolute;
  left: 488px;
  top: 273px;
  width: 145px;
  height: 16px;
  padding-left: 17px;
  background: rgba(240, 240, 240, 0.85);
  display: flex;
  align-items: center;
}

.hud-input {
  width: 51px;
  height: 13px;
  padding-left: 1px;
  background: #fff;
  border: 1px solid #ddd;
  font-size: 8px;
  line-height: 11px;
  white-space: nowrap;
  overflow: hidden;
  margin-right: 4px;
}

.hud-spin {
  margin-left: 9px;
  width: 51px;
  height: 13px;
  display: flex;
  background: #fff;
  border: 1px solid #ddd;
}

.hud-text {
  flex: 1;
  font-size: 8px;
  line-height: 11px;
  white-space: nowrap;
  overflow: hidden;
}

.tooltip {
  position: absolute;
  left: 366px;
  top: 394px;
  width: 113px;
  height: 14px;
  background: #fff;
  border: 1px solid #bbb;
  font-size: 8.7px;
  font-weight: 600;
  line-height: 12px;
  text-align: center;
  white-space: nowrap;
  color: #222;
}

.comments {
  position: absolute;
  left: 3px;
  top: 468px;
  width: 207px;
  height: 17px;
  display: flex;
  align-items: center;
  padding: 0 0 2px 16px;
  background: #f0f0f0;
  border: 1px solid #dedede;
}

/* content center */
.content-center {
  position: absolute;
  left: 710px;
  top: 86px;
  width: 287px;
  height: 399px;
  background: #fff;
  display: flex;
  flex-direction: column;
}

.content-center .panel-head {
  height: 17px;
  flex: none;
}

.cc-nav {
  height: 39px;
  flex: none;
  background: #44596f;
  display: flex;
  align-items: center;
  justify-content: space-between;
  padding: 0 11px;
}

.cc-brand {
  font-family: "Liberation Sans", sans-serif;
  font-size: 13.6px;
  color: #f2f4f6;
}

.cc-toggler {
  width: 39px;
  height: 27px;
  border: 1px solid #52667b;
  border-radius: 4px;
  display: flex;
  flex-direction: column;
  justify-content: center;
  align-items: center;
  gap: 5px;
}

.cc-toggler i {
  width: 17px;
  height: 1.5px;
  background: #a9b4c0;
}

.cc-body {
  flex: 1;
  padding: 10px 11px 0;
}

.cc-card {
  height: 191px;
  width: 265px;
  padding: 14px 13px 0;
  border: 1px solid #dfdfdf;
  border-radius: 4px;
  font-family: "Liberation Sans", sans-serif;
  color: #222;
}

.cc-card h2 {
  margin: 0;
  font-size: 13px;
  line-height: 20px;
}

.cc-toggle {
  margin-top: 10px;
  margin-left: 3px;
  width: max-content;
  padding: 0 1px;
  background: #f6f6f6;
  font-size: 8.7px;
  font-weight: 700;
  line-height: 12px;
}

.cc-label {
  font-size: 11.5px;
  line-height: 18px;
}

.cc-label.second {
  margin-top: 10px;
}

.cc-input {
  margin-top: 5px;
  width: 236px;
  height: 26.5px;
  padding-left: 8px;
  border: 1px solid #ccd1d6;
  border-radius: 3px;
  font-size: 11.5px;
  line-height: 24.5px;
  color: #495057;
}

.cc-footer {
  height: 41px;
  flex: none;
  position: relative;
  background: #f4f4f4;
  font-family: "Liberation Sans", sans-serif;
  font-size: 11.4px;
  overflow: hidden;
}

.cc-footer p {
  margin: 14px 0 0 62px;
  color: #6c757d;
  white-space: nowrap;
}

.cc-footer a {
  color: #007bff;
}

.cc-logo {
  position: absolute;
  left: 9px;
  top: 34px;
  width: 22px;
  height: 8px;
}

.cc-status {
  height: 25px;
  flex: none;
  position: relative;
  background: #f0f0f0;
  border: 1px solid #dedede;
  border-top: 0;
}

.cc-close {
  position: absolute;
  right: 4px;
  top: 6px;
  width: 42px;
  height: 13px;
  padding: 0;
  font-family: inherit;
  font-size: 8px;
  color: #777;
  background: #ececec;
  border: 1px solid #ccc;
}

.cc-selections {
  position: absolute;
  right: 23px;
  top: 10px;
  font-size: 8px;
  font-weight: 600;
  color: #333;
  z-index: 1;
}

.cc-handle {
  position: absolute;
  left: 796px;
  bottom: 0;
  width: 10px;
  height: 3px;
  background: #bbb;
  border-radius: 2px 2px 0 0;
}

/* timeline */
.timeline {
  height: 33px;
  flex: none;
  background: #f2f2f2;
  border-top: 1px solid #dcdcdc;
  display: flex;
  align-items: center;
  position: relative;
}

.player {
  display: flex;
  gap: 7.5px;
  margin-left: 6px;
}

.player svg {
  width: 10px;
  height: 10px;
}

.history {
  position: relative;
  margin-left: 13px;
  display: flex;
}

.hist-bar {
  position: absolute;
  left: 1px;
  top: -4px;
  width: 80px;
  height: 4px;
  background: #a6d2ee;
}

.hist-item {
  width: 16.5px;
  height: 16px;
  display: flex;
  align-items: center;
  justify-content: center;
}

.hist-item.on {
  background: #3a96d0;
}

.hist-item svg {
  width: 12px;
  height: 13px;
}

.hist-links {
  position: absolute;
  left: 8px;
  top: 16px;
  width: 66px;
  height: 3px;
  border: 1px solid #bbb;
  border-top: 0;
  background: repeating-linear-gradient(90deg, transparent 0 15.5px, #bbb 15.5px 16.5px);
}

.hist-marker {
  position: absolute;
  left: 78px;
  top: -4px;
  width: 8px;
  height: 22px;
}

.settings {
  width: 12px;
  height: 12px;
  margin-left: auto;
  margin-right: 9px;
}
```
